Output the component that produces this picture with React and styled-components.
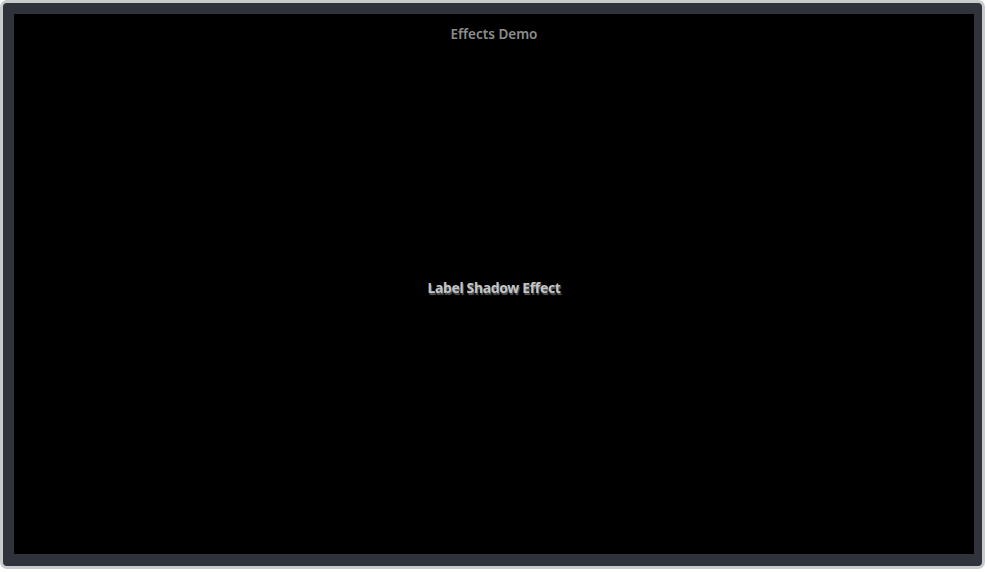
import React from 'react';
import styled, { createGlobalStyle } from 'styled-components';

const GlobalStyle = createGlobalStyle`
  html, body {
    margin: 0;
    padding: 0;
    background: #ffffff;
  }
  body {
    font-family: "Noto Sans", "DejaVu Sans", sans-serif;
  }
`;

export default function App() {
  return (
    <>
      <GlobalStyle />
      <StWindow>
        <StScreen>
          <StTitle>Effects Demo</StTitle>
          <StStage>
            <StShadowLabel>Label Shadow Effect</StShadowLabel>
          </StStage>
        </StScreen>
      </StWindow>
    </>
  );
}

const StWindow = styled.div`
  width: 985px;
  height: 569px;
  box-sizing: border-box;
  border: 3px solid #c9cacc;
  border-radius: 7px;
  background: #30333b;
  padding: 11px 8px 12px 11px;
`;

const StScreen = styled.div`
  width: 960px;
  height: 540px;
  background: #000000;
  display: flex;
  flex-direction: column;
  align-items: center;
`;

const StTitle = styled.div`
  margin-top: 11px;
  height: 18px;
  line-height: 18px;
  font-size: 13.5px;
  font-weight: 600;
  color: #8c8c8c;
`;

const StStage = styled.div`
  flex: 1;
  display: flex;
  align-items: center;
  justify-content: center;
  padding-bottom: 22px;
`;

const StShadowLabel = styled.div`
  font-size: 14px;
  font-weight: 700;
  color: #c4c4c4;
  text-shadow: 1px 2px 1px #5a5a5a;
  letter-spacing: -0.35px;
`;
